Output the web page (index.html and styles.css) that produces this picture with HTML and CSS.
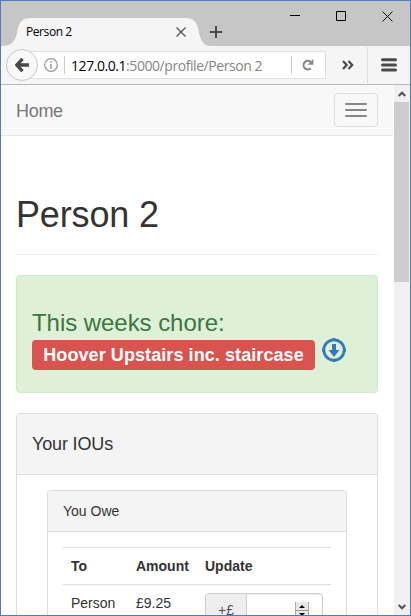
FILE: index.html
```html
<!DOCTYPE html>
<html lang="en">
<head>
<meta charset="utf-8">
<title>Person 2</title>
<link rel="stylesheet" href="styles.css">
</head>
<body>
<div class="window">
  <header class="tabstrip">
    <div class="tab">
      <svg class="tab-shape" width="210" height="28" viewBox="0 0 210 28"><path d="M0 28C9 28 13 25 15.500 17L17 10C19 3 22 0 30 0H184C192 0 195 3 197 10L198.500 17C201 25 204 28 210 28Z" fill="#f5f5f5"/></svg>
      <span class="tab-title">Person 2</span>
      <svg class="tab-close" width="12" height="12" viewBox="0 0 12 12"><path d="M1.500 1.500L10.500 10.500M10.500 1.500L1.500 10.500" stroke="#4d4d4d" stroke-width="1.200"/></svg>
    </div>
    <svg class="tab-new" width="12" height="12" viewBox="0 0 12 12"><path d="M6 0V12M0 6H12" stroke="#4a4a4a" stroke-width="2"/></svg>
    <div class="controls">
      <svg width="10" height="10" viewBox="0 0 10 10"><path d="M0 4.500H10" stroke="#000"/></svg>
      <svg width="10" height="10" viewBox="0 0 10 10"><path d="M.5.5H9.500V9.500H.5Z" fill="none" stroke="#000"/></svg>
      <svg width="11" height="11" viewBox="0 0 11 11"><path d="M.5.5L10.500 10.500M10.500.5L.5 10.500" stroke="#111"/></svg>
    </div>
  </header>
  <div class="toolbar">
    <div class="back"><svg width="14" height="14" viewBox="0 0 14 14"><path d="M7.500 0.800L1.800 7L7.500 13.200M2.500 7H14" fill="none" stroke="#4a4a4a" stroke-width="3.300"/></svg></div>
    <div class="urlbar">
      <svg class="info" width="14" height="14" viewBox="0 0 14 14"><circle cx="7" cy="7" r="6.300" fill="none" stroke="#999" stroke-width="1.200"/><path d="M7 3V4.800M7 6V11" stroke="#999" stroke-width="1.500"/></svg>
      <span class="rule"></span>
      <span class="url"><b>127.0.0.1</b>:5000/profile/Person 2</span>
      <span class="rule rule-end"></span>
      <svg class="reload" width="12" height="12" viewBox="0 0 12 12"><path d="M8.800 9.300A4.300 4.300 0 1 1 8.600 2.800" fill="none" stroke="#858585" stroke-width="2"/><path d="M11.300 0V5.700H5.600Z" fill="#858585"/></svg>
    </div>
    <svg class="overflow" width="12" height="10" viewBox="0 0 12 10"><path d="M1 1L4.700 5L1 9M6.500 1L10.200 5L6.500 9" fill="none" stroke="#4a4a4a" stroke-width="2.200"/></svg>
    <span class="split"></span>
    <svg class="menu" width="16" height="14" viewBox="0 0 16 14"><path d="M1.500 1.800H14.500M1.500 6.900H14.500M1.500 12H14.500" stroke="#4a4a4a" stroke-width="3" stroke-linecap="round"/></svg>
  </div>
  <div class="viewport">
    <main class="page">
      <nav class="navbar">
        <a class="brand">Home</a>
        <div class="toggle"><i></i><i></i><i></i></div>
      </nav>
      <div class="container">
        <h1>Person 2</h1>
        <section class="alert">
          <h3>This weeks chore:</h3>
          <div class="chore">
            <span class="label">Hoover Upstairs inc. staircase</span>
            <svg class="download" width="24" height="24" viewBox="0 0 24 24"><circle cx="12" cy="12" r="10.200" fill="none" stroke="#337ab7" stroke-width="2.800"/><path d="M12 0V3M12 21V24M0 12H3M21 12H24" stroke="#337ab7" stroke-width="3"/><path d="M10 6H14V12H17.500L12 19L6.500 12H10Z" fill="#337ab7"/></svg>
          </div>
        </section>
        <section class="panel">
          <h4 class="panel-head">Your IOUs</h4>
          <div class="panel-body">
            <section class="panel inner">
              <div class="panel-head">You Owe</div>
              <div class="panel-body">
                <table>
                  <thead><tr><th class="to">To</th><th class="amount">Amount</th><th>Update</th></tr></thead>
                  <tbody><tr><td>Person</td><td>£9.25</td><td><div class="input-group"><span class="addon">+£</span><span class="field"><svg class="spinner" width="14" height="17" viewBox="0 0 14 17"><path d="M0 0H14V17H0Z" fill="#e8e8e8"/><path d="M.5 0V17M13.500 0V17" stroke="#aaa"/><path d="M0 8.500H14" stroke="#999"/><path d="M4 6L7 3L10 6ZM4 11L7 14L10 11Z" fill="#000"/></svg></span></div></td></tr></tbody>
                </table>
              </div>
            </section>
          </div>
        </section>
      </div>
    </main>
    <aside class="scrollbar">
      <svg class="arrow" width="8" height="6" viewBox="0 0 8 6"><path d="M.7 5L4 1.700L7.300 5" fill="none" stroke="#505050" stroke-width="2"/></svg>
      <div class="thumb"></div>
      <svg class="arrow down" width="8" height="6" viewBox="0 0 8 6"><path d="M.7 1L4 4.300L7.300 1" fill="none" stroke="#505050" stroke-width="2"/></svg>
    </aside>
  </div>
</div>
</body>
</html>
```
FILE: styles.css
```css
* { box-sizing: border-box; }
body { margin: 0; overflow: hidden; font: 14px/20px "Liberation Sans", Arial, sans-serif; color: #333; }
svg { display: block; flex: none; }
.window { width: 411px; height: 616px; border: 1px solid #507dbc; display: flex; flex-direction: column; overflow: hidden; background: #fff; }

.tabstrip { height: 45px; flex: none; background: #c6c6c6; display: flex; align-items: flex-start; }
.tab { position: relative; width: 209px; height: 28px; margin-top: 17px; display: flex; align-items: center; padding-left: 25px; }
.tab-shape { position: absolute; left: 0; top: 0; }
.tab-title { position: relative; width: 149px; font: 12px/16px "Open Sans", sans-serif; color: #000; letter-spacing: -0.42px; }
.tab-close { position: relative; }
.tab-new { margin-top: 25px; }
.controls { margin: 10px 0 0 68px; display: flex; gap: 36px; }

.toolbar { height: 39px; flex: none; background: #f5f5f5; border-bottom: 1px solid #b9b9b9; display: flex; align-items: center; }
.back { position: relative; z-index: 1; width: 32px; height: 32px; margin-left: 5px; border: 1px solid #c8c8c8; border-radius: 50%; background: #f8f8f8; display: flex; align-items: center; justify-content: center; }
.urlbar { width: 296px; height: 28px; margin-left: -8px; padding-left: 13px; border: 1px solid #e1e1e1; background: #fff; display: flex; align-items: center; }
.rule { width: 1px; height: 18px; background: #ccc; margin-left: 6px; flex: none; }
.rule-end { margin-left: 0; }
.url { width: 226px; padding: 1px 0 0 6px; font: 14px/20px "Open Sans", sans-serif; letter-spacing: -0.44px; color: #858585; white-space: nowrap; }
.url b { font-weight: 400; color: #000; }
.reload { margin-left: 10px; }
.overflow { margin-left: 16px; }
.split { width: 1px; height: 36px; background: #ddd; margin-left: 13px; }
.menu { margin-left: 13px; }

.viewport { flex: 1; min-height: 0; display: flex; }
.page { width: 392px; overflow: hidden; }
.navbar { height: 51px; background: #f8f8f8; border-bottom: 1px solid #e7e7e7; padding: 0 15px; display: flex; align-items: center; justify-content: space-between; }
.brand { padding-top: 2px; font-size: 18px; letter-spacing: -0.3px; color: #777; }
.toggle { width: 44px; height: 34px; border: 1px solid #ddd; border-radius: 4px; display: flex; flex-direction: column; align-items: center; justify-content: center; gap: 4px; }
.toggle i { width: 22px; height: 2px; border-radius: 1px; background: #888; }
.container { padding: 0 15px; }
h1 { font-size: 36px; font-weight: 500; line-height: 39px; letter-spacing: -0.15px; margin: 59px 0 20px; padding-bottom: 20px; border-bottom: 1px solid #eee; }
.alert { height: 118px; padding: 34px 15px 0; border: 1px solid #d0e9c6; border-radius: 4px; background: #dff0d8; margin-bottom: 20px; }
h3 { font-size: 24px; line-height: 26px; font-weight: 500; margin: 0; color: #3c763d; letter-spacing: -0.05px; }
.chore { display: flex; align-items: flex-start; }
.label { width: 283px; height: 30px; margin-top: 4px; border-radius: 4px; background: #d9534f; color: #fff; font-size: 18px; line-height: 30px; font-weight: 700; letter-spacing: 0.08px; text-align: center; white-space: nowrap; }
.download { margin: 2px 0 0 7px; }
.panel { border: 1px solid #ddd; border-radius: 4px; background: #fff; box-shadow: 0 1px 1px rgba(0,0,0,.05); }
.panel-head { margin: 0; padding: 20px 15px; border-bottom: 1px solid #ddd; border-radius: 3px 3px 0 0; background: #f4f4f4; font-weight: 500; }
h4.panel-head { font-size: 18px; line-height: 20px; letter-spacing: -0.15px; }
.panel-body { padding: 15px 30px; }
.inner .panel-head { padding: 10px 15px; }
.inner .panel-body { padding: 15px; }
table { width: 268px; border-collapse: collapse; table-layout: fixed; }
th, td { padding: 8px; border-top: 1px solid #ddd; text-align: left; vertical-align: top; }
th:nth-child(2), td:nth-child(2) { padding-left: 9px; padding-right: 0; }
.to { width: 64px; }
.amount { width: 70px; }
.input-group { width: 118px; height: 34px; border: 1px solid #ccc; border-radius: 4px; display: flex; overflow: hidden; }
.addon { width: 41px; padding-left: 12px; line-height: 32px; background: #eee; border-right: 1px solid #ccc; color: #555; }
.field { flex: 1; display: flex; align-items: center; justify-content: flex-end; padding-right: 13px; box-shadow: inset 0 1px 1px rgba(0,0,0,.075); }

.scrollbar { width: 16px; margin-left: 1px; background: #f0f0f0; display: flex; flex-direction: column; align-items: center; padding: 6px 0; }
.thumb { width: 15px; height: 180px; margin: 5px 1px 0 0; background: #cdcdcd; }
.down { margin-top: auto; margin-bottom: -1px; }
```
